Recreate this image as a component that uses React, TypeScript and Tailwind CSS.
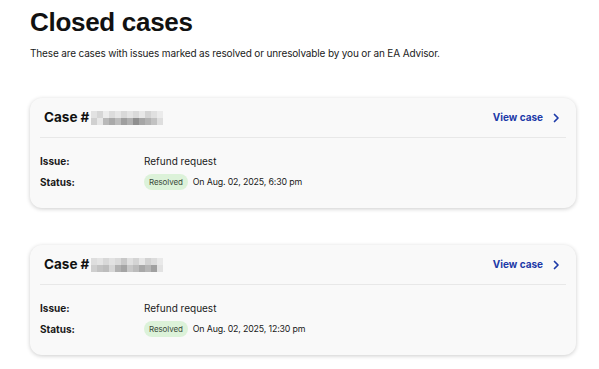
import React from "react";

const rows1 = [
  ["#e2e2e2","#d6d6d6","#ececec","#dcdcdc","#e6e6e6","#d9d9d9","#e4e4e4","#dadada","#e8e8e8","#d4d4d4","#e0e0e0","#ebebeb"],
  ["#d0d0d0","#e6e6e6","#b9b9b9","#a9a9a9","#bcbcbc","#9f9f9f","#b0b0b0","#8f8f8f","#a6a6a6","#b3b3b3","#c2c2c2","#dedede"],
];
const rows2 = [
  ["#dedede","#e4e4e4","#d8d8d8","#e2e2e2","#dadada","#c8c8c8","#e0e0e0","#d4d4d4","#e6e6e6","#d2d2d2","#dcdcdc","#e9e9e9"],
  ["#cfcfcf","#c3c3c3","#bdbdbd","#d6d6d6","#b2b2b2","#a4a4a4","#c8c8c8","#bcbcbc","#a8a8a8","#b6b6b6","#a0a0a0","#e2e2e2"],
];

function Pixelated({ rows }: { rows: string[][] }) {
  return (
    <div className="flex flex-col ml-[2px]">
      {rows.map((r, ri) => (
        <div key={ri} className="flex">
          {r.map((c, i) => (
            <div key={i} className="w-[6px] h-[7px]" style={{ background: c }} />
          ))}
        </div>
      ))}
    </div>
  );
}

function CaseCard({ rows, date }: { rows: string[][]; date: string }) {
  return (
    <div className="ml-[30px] mr-[23px] rounded-[12px] bg-[#f9f9f9] shadow-[0_1px_4px_rgba(0,0,0,0.2)]">
      <div className="flex items-center justify-between pl-[14px] pr-[16px] h-[39px]">
        <div className="flex items-center">
          <span className="text-[13.5px] font-bold text-[#111] leading-none">Case #</span>
          <Pixelated rows={rows} />
        </div>
        <div className="flex items-center gap-[10px] text-[#1d3aa8]">
          <span className="text-[10px] font-bold">View case</span>
          <svg width="7" height="10" viewBox="0 0 7 10" fill="none">
            <path d="M1.5 1.5L5 5L1.5 8.5" stroke="#1d3aa8" strokeWidth="1.7" strokeLinecap="round" strokeLinejoin="round" />
          </svg>
        </div>
      </div>
      <div className="mx-[10px] h-px bg-[#e8e8e8]" />
      <div className="px-[10px] pt-[15px] pb-[18px] flex flex-col gap-[5px] text-[10px] text-[#1a1a1a]">
        <div className="flex items-center h-[16px]">
          <span className="w-[104px] font-bold">Issue:</span>
          <span>Refund request</span>
        </div>
        <div className="flex items-center h-[16px]">
          <span className="w-[104px] font-bold">Status:</span>
          <span className="rounded-full bg-[#dcf2d9] px-[5px] h-[16px] flex items-center text-[8px] text-[#3a4a3a] tracking-[-0.1px]">Resolved</span>
          <span className="ml-[5px] text-[8.8px] tracking-[-0.15px]">{date}</span>
        </div>
      </div>
    </div>
  );
}

export default function App() {
  return (
    <div className="w-[599px] h-[369px] bg-white overflow-hidden" style={{ fontFamily: "Inter, 'Liberation Sans', sans-serif" }}>
      <h1
        className="px-[30px] pt-[6px] text-[26px] font-bold text-[#111] leading-[32px] tracking-[-0.3px]"
        style={{ fontFamily: "'Liberation Sans', Arial, sans-serif" }}
      >
        Closed cases
      </h1>
      <p className="px-[30px] mt-[8px] text-[10px] text-[#1a1a1a] leading-[14px] tracking-[-0.15px]">
        These are cases with issues marked as resolved or unresolvable by you or an EA Advisor.
      </p>
      <div className="mt-[38px]">
        <CaseCard rows={rows1} date="On Aug. 02, 2025, 6:30 pm" />
      </div>
      <div className="mt-[37px]">
        <CaseCard rows={rows2} date="On Aug. 02, 2025, 12:30 pm" />
      </div>
    </div>
  );
}
